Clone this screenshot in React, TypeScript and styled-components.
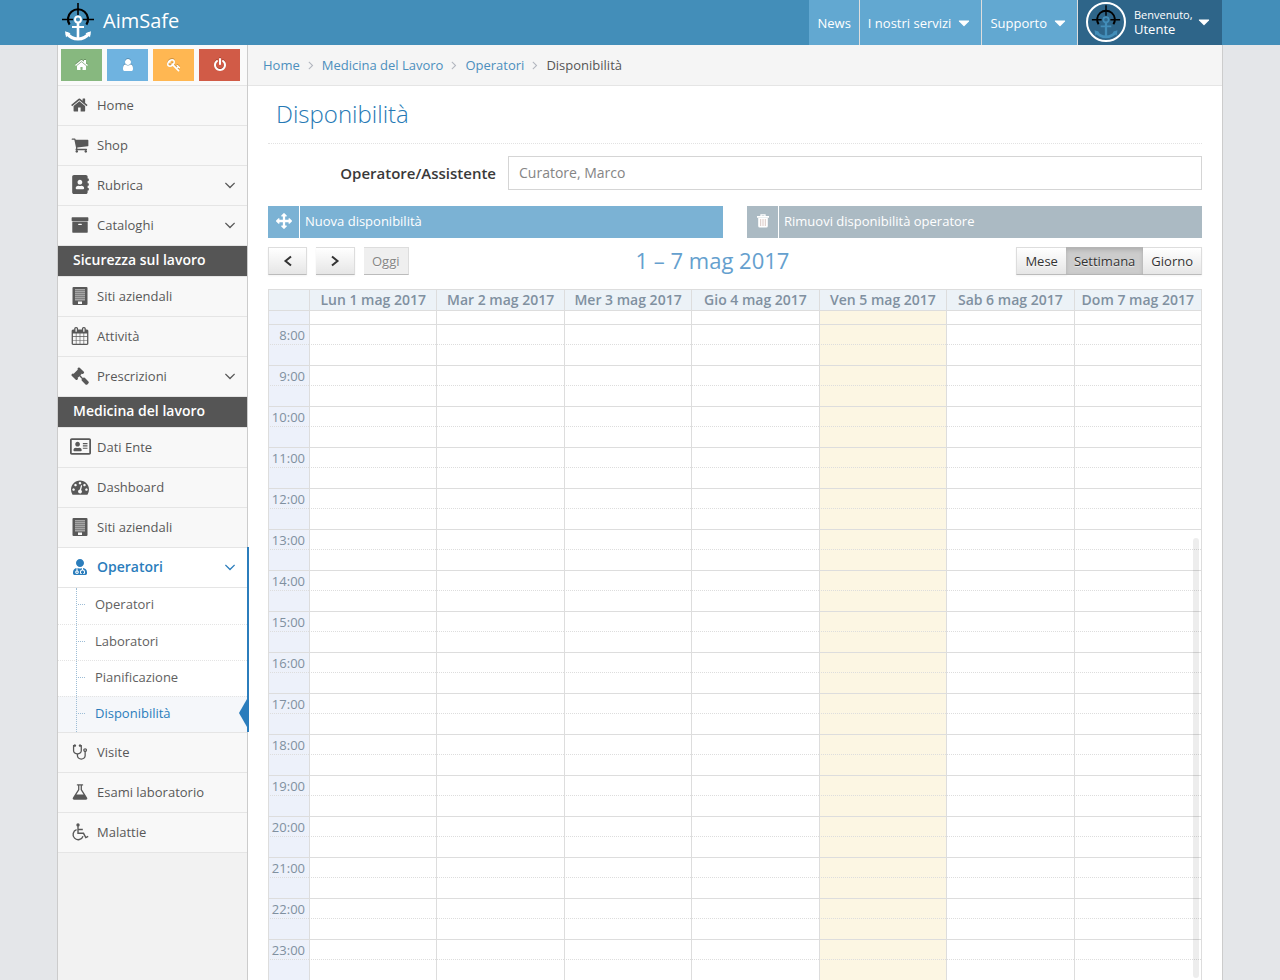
import React from "react";
import styled, { createGlobalStyle, css } from "styled-components";
import { FaAddressBook, FaRegAddressCard, FaUserMd } from "react-icons/fa";

const GlobalStyle = createGlobalStyle`
  *, *::before, *::after { box-sizing: border-box; }
  body {
    margin: 0;
    background: #e4e6e9;
    color: #393939;
    font-family: "Open Sans", "Noto Sans", sans-serif;
    font-size: 13px;
    line-height: 20px;
  }
  a { text-decoration: none; color: inherit; }
  ul, ol { list-style: none; margin: 0; padding: 0; }
  h1, h2 { margin: 0; }
  button, input { font: inherit; margin: 0; }
`;

const paths = {
  home: "M1408 992v480q0 26-19 45t-45 19h-384v-384h-256v384h-384q-26 0-45-19t-19-45v-480q0-1 .5-3t.5-3l575-474 575 474q1 2 1 6zm223-69l-62 74q-8 9-21 11h-3q-13 0-21-7l-692-577-692 577q-12 8-24 7-13-2-21-11l-62-74q-8-10-7-23.5t11-21.500l719-599q32-26 76-26t76 26l244 204v-195q0-14 9-23t23-9h192q14 0 23 9t9 23v408l219 182q10 8 11 21.500t-7 23.500z",
  cart: "M704 1536q0 52-38 90t-90 38-90-38-38-90 38-90 90-38 90 38 38 90zm896 0q0 52-38 90t-90 38-90-38-38-90 38-90 90-38 90 38 38 90zm128-1088v512q0 24-16.500 42.500t-40.500 21.500l-1044 122q13 60 13 70 0 16-24 64h920q26 0 45 19t19 45-19 45-45 19h-1024q-26 0-45-19t-19-45q0-11 8-31.500t16-36 21.500-40 15.500-29.500l-177-823h-204q-26 0-45-19t-19-45 19-45 45-19h256q16 0 28.500 6.500t19.500 15.500 13 24.500 8 26 5.500 29.500 4.500 26h1201q26 0 45 19t19 45z",
  user: "M1536 1399q0 109-62.500 187t-150.500 78h-854q-88 0-150.500-78t-62.500-187q0-85 8.500-160.500t31.500-152 58.500-131 94-89 134.500-34.500q131 128 313 128t313-128q76 0 134.500 34.500t94 89 58.500 131 31.500 152 8.500 160.500zm-256-887q0 159-112.500 271.500t-271.500 112.500-271.500-112.500-112.500-271.500 112.500-271.500 271.500-112.500 271.500 112.500 112.500 271.500z",
  archive: "M1088 832q0-26-19-45t-45-19h-256q-26 0-45 19t-19 45 19 45 45 19h256q26 0 45-19t19-45zm576-192v960q0 26-19 45t-45 19h-1408q-26 0-45-19t-19-45v-960q0-26 19-45t45-19h1408q26 0 45 19t19 45zm64-448v256q0 26-19 45t-45 19h-1536q-26 0-45-19t-19-45v-256q0-26 19-45t45-19h1536q26 0 45 19t19 45z",
  power: "M1664 896q0 156-61 298t-164 245-245 164-298 61-298-61-245-164-164-245-61-298q0-182 80.500-343t226.500-270q43-32 95.500-25t83.500 50q32 42 24.500 94.500t-49.500 84.500q-98 74-151.500 181t-53.500 228q0 104 40.500 198.500t109.500 163.500 163.500 109.500 198.500 40.500 198.500-40.500 163.500-109.500 109.500-163.500 40.500-198.500q0-121-53.500-228t-151.500-181q-42-32-49.500-84.500t24.500-94.500q31-43 84-50t95 25q146 109 226.500 270t80.500 343zm-640-768v640q0 52-38 90t-90 38-90-38-38-90v-640q0-52 38-90t90-38 90 38 38 90z",
  key: "M832 512q0-80-56-136t-136-56-136 56-56 136q0 42 19 83-41-19-83-19-80 0-136 56t-56 136 56 136 136 56 136-56 56-136q0-42-19-83 41 19 83 19 80 0 136-56t56-136zm851 704q0 17-49 66t-66 49q-9 0-28.500-16t-36.500-33-38.500-40-24.500-26l-96 96 220 220q28 28 28 68 0 42-39 81t-81 39q-40 0-68-28l-671-671q-176 131-365 131-163 0-265.500-102.500t-102.500-265.500q0-160 95-313t248-248 313-95q163 0 265.500 102.500t102.500 265.500q0 189-131 365l355 355 96-96q-3-3-26-24.500t-40-38.500-33-36.500-16-28.500q0-17 49-66t66-49q13 0 23 10 6 6 46 44.500t82 79.500 86.500 86 73 78 28.500 41z",
  angleDown: "M1395 736q0 13-10 23l-466 466q-10 10-23 10t-23-10l-466-466q-10-10-10-23t10-23l50-50q10-10 23-10t23 10l393 393 393-393q10-10 23-10t23 10l50 50q10 10 10 23z",
  angleRight: "M1171 960q0 13-10 23l-466 466q-10 10-23 10t-23-10l-50-50q-10-10-10-23t10-23l393-393-393-393q-10-10-10-23t10-23l50-50q10-10 23-10t23 10l466 466q10 10 10 23z",
  caret: "M1408 704q0 26-19 45l-448 448q-19 19-45 19t-45-19l-448-448q-19-19-19-45t19-45 45-19h896q26 0 45 19t19 45z",
  arrows: "M1792 896q0 26-19 45l-256 256q-19 19-45 19t-45-19-19-45v-128h-384v384h128q26 0 45 19t19 45-19 45l-256 256q-19 19-45 19t-45-19l-256-256q-19-19-19-45t19-45 45-19h128v-384h-384v128q0 26-19 45t-45 19-45-19l-256-256q-19-19-19-45t19-45l256-256q19-19 45-19t45 19 19 45v128h384v-384h-128q-26 0-45-19t-19-45 19-45l256-256q19-19 45-19t45 19l256 256q19 19 19 45t-19 45-45 19h-128v384h384v-128q0-26 19-45t45-19 45 19l256 256q19 19 19 45z",
  gavel: "M1771 1536q0 53-37 90l-107 108q-39 37-91 37-53 0-90-37l-363-364q-38-36-38-90 0-53 43-96l-256-256-126 126q-14 14-34 14t-34-14q2 2 12.500 12t12.500 13 10 11.500 10 13.500 6 13.500 5.500 16.500 1.500 18q0 38-28 68-3 3-16.500 18t-19 20.500-18.500 16.500-22 15.500-22 9-26 4.500q-40 0-68-28l-408-408q-28-28-28-68 0-13 4.500-26t9-22 15.500-22 16.500-18.500 20.500-19 18-16.500q30-28 68-28 10 0 18 1.500t16.500 5.500 13.500 6 13.500 10 11.500 10 13 12.500 12 12.500q-14-14-14-34t14-34l348-348q14-14 34-14t34 14q-2-2-12.500-12t-12.500-13-10-11.500-10-13.500-6-13.500-5.500-16.500-1.500-18q0-38 28-68 3-3 16.500-18t19-20.500 18.500-16.500 22-15.500 22-9 26-4.500q40 0 68 28l408 408q28 28 28 68 0 13-4.500 26t-9 22-15.500 22-16.500 18.500-20.500 19-18 16.500q-30 28-68 28-10 0-18-1.500t-16.500-5.500-13.500-6-13.500-10-11.500-10-13-12.500-12-12.500q14 14 14 34t-14 34l-126 126 256 256q43-43 96-43 52 0 91 37l363 363q37 39 37 91z",
  calendar: "M192 1664h288v-288h-288v288zm352 0h320v-288h-320v288zm-352-352h288v-320h-288v320zm352 0h320v-320h-320v320zm-352-384h288v-288h-288v288zm736 736h320v-288h-320v288zm-384-736h320v-288h-320v288zm768 736h288v-288h-288v288zm-384-352h320v-320h-320v320zm-352-864v-288q0-13-9.500-22.500t-22.500-9.500h-64q-13 0-22.500 9.500t-9.500 22.500v288q0 13 9.500 22.500t22.500 9.500h64q13 0 22.500-9.500t9.500-22.500zm736 864h288v-320h-288v320zm-384-384h320v-288h-320v288zm384 0h288v-288h-288v288zm32-480v-288q0-13-9.500-22.500t-22.500-9.500h-64q-13 0-22.500 9.500t-9.500 22.500v288q0 13 9.500 22.500t22.500 9.500h64q13 0 22.500-9.500t9.500-22.500zm384-64v1280q0 52-38 90t-90 38h-1408q-52 0-90-38t-38-90v-1280q0-52 38-90t90-38h128v-96q0-66 47-113t113-47h64q66 0 113 47t47 113v96h384v-96q0-66 47-113t113-47h64q66 0 113 47t47 113v96h128q52 0 90 38t38 90z",
  flask: "M1591 1448q56 89 21.500 152.500t-140.500 63.500h-1152q-106 0-140.500-63.500t21.500-152.500l503-793v-399h-64q-26 0-45-19t-19-45 19-45 45-19h512q26 0 45 19t19 45-19 45-45 19h-64v399zm-779-725l-272 429h712l-272-429-20-31v-436h-128v436z",
  dashboard: "M384 1152q0-53-37.500-90.500t-90.500-37.500-90.500 37.500-37.500 90.500 37.500 90.500 90.500 37.500 90.500-37.500 37.500-90.500zm192-448q0-53-37.500-90.500t-90.500-37.500-90.500 37.500-37.500 90.500 37.500 90.500 90.500 37.500 90.500-37.500 37.500-90.500zm428 481l101-382q6-26-7.500-48.500t-38.500-29.500-48 6.500-30 39.500l-101 382q-60 5-107 43.500t-63 98.500q-20 77 20 146t117 89 146-20 89-117q16-60-6-117t-72-91zm660-33q0-53-37.500-90.500t-90.500-37.500-90.500 37.500-37.500 90.500 37.500 90.500 90.500 37.500 90.500-37.500 37.500-90.500zm-640-640q0-53-37.500-90.500t-90.500-37.500-90.500 37.500-37.500 90.500 37.500 90.500 90.500 37.500 90.500-37.500 37.500-90.500zm448 192q0-53-37.500-90.500t-90.500-37.500-90.500 37.500-37.500 90.500 37.500 90.500 90.500 37.500 90.500-37.500 37.500-90.500zm320 448q0 261-141 483-19 29-54 29h-1402q-35 0-54-29-141-221-141-483 0-182 71-348t191-286 286-191 348-71 348 71 286 191 191 286 71 348z",
  stethoscope: "M1472 704q0-26-19-45t-45-19-45 19-19 45 19 45 45 19 45-19 19-45zm128 0q0 62-35.500 111t-92.500 70v395q0 159-131.500 271.500t-316.500 112.500-316.500-112.500-131.500-271.500v-132q-164-20-274-128t-110-252v-512q0-26 19-45t45-19q6 0 16 2 17-30 47-48t65-18q53 0 90.500 37.500t37.500 90.500-37.500 90.500-90.500 37.500q-33 0-64-18v402q0 106 94 181t226 75 226-75 94-181v-402q-31 18-64 18-53 0-90.500-37.500t-37.500-90.500 37.500-90.500 90.500-37.500q35 0 65 18t47 48q10-2 16-2 26 0 45 19t19 45v512q0 144-110 252t-274 128v132q0 106 94 181t226 75 226-75 94-181v-395q-57-21-92.500-70t-35.500-111q0-80 56-136t136-56 136 56 56 136z",
};

function Glyph({ name, size = 18 }: { name: keyof typeof paths; size?: number }) {
  return (
    <svg width={size} height={size} viewBox="0 0 1792 1792" fill="currentColor" aria-hidden="true">
      <path d={paths[name]} />
    </svg>
  );
}

function BuildingIcon() {
  return (
    <svg width="16" height="20" viewBox="0 0 16 20" aria-hidden="true">
      <rect x="0.500" y="1" width="15" height="18" rx="1" fill="currentColor" />
      <g fill="#f8f8f8">
        {[3, 5, 7, 9, 11, 13].map((y) =>
          [3, 5, 7, 9, 11].map((x) => <rect key={`${x}-${y}`} x={x + 0.4} y={y + 0.2} width="1.200" height="1.200" />)
        )}
        <rect x="6" y="15.500" width="4" height="2.500" />
      </g>
    </svg>
  );
}

function WheelchairIcon() {
  return (
    <svg width="18" height="18" viewBox="0 0 18 18" fill="none" stroke="currentColor" strokeWidth="1.400" aria-hidden="true">
      <circle cx="7" cy="1.900" r="1.700" fill="currentColor" stroke="none" />
      <path d="M7 3v7.300h5.500l2.300 4.300 2.400-1.200M7 6.500h4.800" />
      <path d="M5.600 6.700A5.100 5.100 0 1 0 12 13.200" />
    </svg>
  );
}

function TrashIcon() {
  return (
    <svg width="12" height="14" viewBox="0 0 12 14" aria-hidden="true">
      <path d="M4 2V.8h4V2" fill="none" stroke="#fff" strokeWidth="1.300" />
      <path d="M0 2h12v1.700H0z M1.200 4h9.600v8q0 1.500-1.500 1.500H2.700q-1.500 0-1.500-1.500z" fill="#fff" />
      <path d="M3.700 5v7M6 5v7M8.300 5v7" stroke="#d9c8c4" strokeWidth="1" />
    </svg>
  );
}

function AnchorMark({ size, anchor }: { size: number; anchor: string }) {
  return (
    <svg width={size} height={Math.round(size * 1.15)} viewBox="0 0 34 39" fill="none" aria-hidden="true">
      <g stroke="#000">
        <path d="M17 1v12M1 17.500h11M22 17.500h11" strokeWidth="1.600" />
        <path d="M8.600 22.700A10 10 0 1 1 25.400 22.700" strokeWidth="2.200" />
      </g>
      <g stroke={anchor}>
        <circle cx="17" cy="17.500" r="3" strokeWidth="1.900" />
        <path d="M17 20.500V36" strokeWidth="2.600" />
        <path d="M11 25h12" strokeWidth="2" />
        <path d="M5.500 31Q10 37 17 37T28.500 31" strokeWidth="3" />
      </g>
      <path d="M4 29.300l5.500 2-4.500 4zM30 29.300l-5.500 2 4.500 4z" fill={anchor} />
    </svg>
  );
}

const Page = styled.div`
  display: flex;
  flex-direction: column;
  min-height: 100vh;
`;

const TopBar = styled.header`
  background: #438eb9;
`;

const TopBarInner = styled.div`
  display: flex;
  justify-content: space-between;
  max-width: 1164px;
  height: 45px;
  margin: 0 auto;
`;

const Brand = styled.a`
  display: flex;
  align-items: center;
  gap: 8px;
  padding: 0 3px 3px;
  color: #fff;
  font-size: 20px;
`;

const TopNav = styled.nav`
  display: flex;
`;

const TopLink = styled.a`
  display: flex;
  align-items: center;
  gap: 4px;
  padding: 0 8px;
  border-right: 1px solid #ddd;
  background: #62a8d1;
  color: #fff;
`;

const UserMenu = styled.button`
  display: flex;
  align-items: center;
  padding: 0 9px 2px 8px;
  border: 0;
  background: #2e6589;
  color: #fff;
  text-align: left;
  line-height: 15px;
`;

const Avatar = styled.span`
  display: flex;
  align-items: center;
  justify-content: center;
  width: 40px;
  height: 40px;
  margin-right: 8px;
  border: 2px solid #fff;
  border-radius: 50%;
`;

const Greeting = styled.span`
  display: block;
  width: 61px;
  white-space: nowrap;

  small {
    display: block;
    font-size: 11px;
  }
`;

const Container = styled.div`
  display: flex;
  flex: 1;
  width: 100%;
  max-width: 1166px;
  margin: 0 auto;
  border: solid #ccc;
  border-width: 0 1px;
  background: #fff;
`;

const Sidebar = styled.aside`
  flex: 0 0 190px;
  border-right: 1px solid #ccc;
  background: #f2f2f2;
`;

const Shortcuts = styled.div`
  display: flex;
  gap: 5px;
  height: 40px;
  padding: 4px 3px;
  background: #fafafa;
`;

const Shortcut = styled.button<{ $tone: string }>`
  display: flex;
  align-items: center;
  justify-content: center;
  width: 41px;
  height: 32px;
  padding: 0;
  border: 0;
  background: ${(p) => p.$tone};
  color: #fff;

  svg { filter: drop-shadow(0 -1px 0 rgba(0, 0, 0, 0.2)); }
`;

const Menu = styled.ul`
  border-bottom: 1px solid #e5e5e5;
`;

const MenuItem = styled.li`
  position: relative;
  border-top: 1px solid #e5e5e5;
`;

const MenuLink = styled.a<{ $active?: boolean }>`
  display: grid;
  grid-template-columns: 30px 1fr 16px;
  align-items: center;
  height: 39px;
  padding: 0 10px 2px 7px;
  background: ${(p) => (p.$active ? "#fff" : "#f8f8f8")};
  color: ${(p) => (p.$active ? "#2b7dbc" : "#585858")};
  font-size: ${(p) => (p.$active ? 14 : 13)}px;
  font-weight: ${(p) => (p.$active ? 600 : 400)};

  > span { padding: 0 2px; }
  > svg:first-child { justify-self: center; }
`;

const MenuSection = styled.li`
  height: 31px;
  padding: 0 15px;
  border-top: 1px solid #e5e5e5;
  background: #555;
  color: #fff;
  font-size: 14px;
  font-weight: 600;
  line-height: 28px;
`;

const ActiveBar = styled.span`
  position: absolute;
  top: -1px;
  right: -2px;
  bottom: 0;
  width: 2px;
  background: #2b7dbc;
`;

const SubMenu = styled.ul`
  position: relative;
  border-top: 1px solid #e5e5e5;
  background: #fff;

  &::before {
    content: "";
    position: absolute;
    top: 0;
    bottom: 0;
    left: 18px;
    z-index: 1;
    border-left: 1px dotted #9dbdd6;
  }
`;

const SubItem = styled.li<{ $active?: boolean }>`
  position: relative;
  height: 36px;

  & + & { border-top: 1px dotted #e4e4e4; }

  &::before {
    content: "";
    position: absolute;
    top: 16px;
    left: 20px;
    width: 7px;
    border-top: 1px dotted #9dbdd6;
  }

  ${(p) =>
    p.$active &&
    css`
      background: #f5f7fa;
      &::after {
        content: "";
        position: absolute;
        top: 2px;
        right: 0;
        border: solid transparent;
        border-width: 14px 8px 14px 0;
        border-right-color: #2b7dbc;
      }
    `}
`;

const SubLink = styled.a<{ $active?: boolean }>`
  display: block;
  padding-left: 37px;
  color: ${(p) => (p.$active ? "#2b7dbc" : "#616161")};
  line-height: 32px;
`;

const Main = styled.main`
  flex: 1;
  min-width: 0;
`;

const Breadcrumbs = styled.ol`
  display: flex;
  align-items: center;
  height: 41px;
  padding: 0 15px;
  border-bottom: 1px solid #e5e5e5;
  background: #f5f5f5;
  color: #555;

  li { display: flex; align-items: center; }
  a { color: #4c8fbd; }
  svg { margin: 0 4px; color: #b2b6bf; }
`;

const Content = styled.div`
  padding: 12px 20px 0;
`;

const PageTitle = styled.h1`
  height: 46px;
  padding: 0 8px;
  border-bottom: 1px dotted #e2e2e2;
  color: #2679b5;
  font-size: 24px;
  font-weight: 300;
  line-height: 32px;
`;

const Field = styled.div`
  display: flex;
  align-items: center;
  gap: 12px;
  margin: 12px 0 16px;
`;

const FieldLabel = styled.label`
  flex: 0 0 228px;
  font-size: 15px;
  font-weight: 600;
  text-align: right;
`;

const TextBox = styled.input`
  flex: 1;
  min-width: 0;
  height: 34px;
  padding: 0 10px 1px;
  border: 1px solid #d5d5d5;
  background: #fff;
  color: #858585;
  font-size: 14px;
`;

const Actions = styled.div`
  display: grid;
  grid-template-columns: 1fr 1fr;
  gap: 24px;
`;

const ActionButton = styled.button<{ $tone: string }>`
  display: flex;
  height: 32px;
  padding: 0;
  border: 0;
  background: ${(p) => p.$tone};
  color: #fff;
  line-height: 30px;
`;

const ActionIcon = styled.span`
  display: flex;
  align-items: center;
  justify-content: center;
  width: 32px;
  height: 32px;
  margin-right: 5px;
  padding-bottom: 3px;
  border-right: 1px solid #fff;
`;

const Toolbar = styled.div`
  display: flex;
  justify-content: space-between;
  align-items: flex-start;
  margin: 9px 0 14px;
`;

const ToolGroup = styled.div<{ $joined?: boolean }>`
  display: flex;
  gap: ${(p) => (p.$joined ? "0" : "10px")};
`;

const ToolButton = styled.button<{ $pressed?: boolean }>`
  display: flex;
  align-items: center;
  justify-content: center;
  min-width: 39px;
  height: 28px;
  padding: 0 8px;
  border: 1px solid #ddd;
  border-bottom-color: #bbb;
  background: linear-gradient(#fff, #e6e6e6);
  box-shadow: 0 1px 2px rgba(0, 0, 0, 0.05);
  color: #333;
  text-shadow: 0 1px 1px rgba(255, 255, 255, 0.75);

  & + & { margin-left: ${(p) => (p.$pressed ? "-1px" : "0")}; }

  &:disabled {
    background: #efefef;
    box-shadow: none;
    color: #858585;
  }

  ${(p) =>
    p.$pressed &&
    css`
      border-color: #b5b5b5;
      background: #ccc;
      box-shadow: inset 0 2px 4px rgba(0, 0, 0, 0.15);
      & + & { border-left: 0; }
    `}
`;

const RangeTitle = styled.h2`
  color: #65a0ce;
  font-size: 22px;
  font-weight: 400;
  line-height: 26px;
`;

const CalendarFrame = styled.div`
  position: relative;
`;

const CalendarTable = styled.table`
  width: 100%;
  table-layout: fixed;
  border-collapse: separate;
  border-spacing: 0;
  border-right: 1px solid #ddd;

  th, td {
    padding: 0;
    border: solid #ddd;
    border-width: 1px 0 0 1px;
  }
`;

const AxisCol = styled.col`
  width: 41px;
`;

const DayHead = styled.th`
  height: 21px;
  background: #ecf2f7;
  color: #8090a0;
  font-size: 14px;
  font-weight: 600;
  line-height: 20px;
  white-space: nowrap;
`;

const Slot = styled.tr<{ $kind: "lead" | "hour" | "half" }>`
  height: ${(p) => ({ lead: 14, hour: 20, half: 21 })[p.$kind]}px;

  > * { border-top-style: ${(p) => (p.$kind === "half" ? "dotted" : "solid")} !important; }
`;

const TimeCell = styled.th`
  background: #edf1fa;
  color: #8090a0;
  font-weight: 400;
  line-height: 17px;
  text-align: right;

  && { padding: ${(p) => (p.scope ? "2px 4px 0 0" : "0")}; }
`;

const DayCell = styled.td<{ $today: boolean }>`
  background: ${(p) => (p.$today ? "#fcf6e3" : "#fff")};
`;

const ScrollThumb = styled.span`
  position: absolute;
  right: 3px;
  bottom: 2px;
  width: 6px;
  height: 440px;
  border-radius: 3px;
  background: rgba(0, 0, 0, 0.07);
`;

const days = ["Lun 1", "Mar 2", "Mer 3", "Gio 4", "Ven 5", "Sab 6", "Dom 7"];
const today = 4;
const hours = Array.from({ length: 16 }, (_, i) => i + 8);

function Entry({ icon, label, expandable }: { icon: React.ReactNode; label: string; expandable?: boolean }) {
  return (
    <MenuItem>
      <MenuLink href="#">
        {icon}
        <span>{label}</span>
        {expandable && <Glyph name="angleDown" />}
      </MenuLink>
    </MenuItem>
  );
}

function DayCells() {
  return (
    <>
      {days.map((d, i) => (
        <DayCell key={d} $today={i === today} />
      ))}
    </>
  );
}

function SideMenu() {
  return (
    <Menu>
      <Entry icon={<Glyph name="home" />} label="Home" />
      <Entry icon={<Glyph name="cart" />} label="Shop" />
      <Entry icon={<FaAddressBook size={19} />} label="Rubrica" expandable />
      <Entry icon={<Glyph name="archive" />} label="Cataloghi" expandable />
      <MenuSection>Sicurezza sul lavoro</MenuSection>
      <Entry icon={<BuildingIcon />} label="Siti aziendali" />
      <Entry icon={<Glyph name="calendar" />} label="Attività" />
      <Entry icon={<Glyph name="gavel" />} label="Prescrizioni" expandable />
      <MenuSection>Medicina del lavoro</MenuSection>
      <Entry icon={<FaRegAddressCard size={21} />} label="Dati Ente" />
      <Entry icon={<Glyph name="dashboard" />} label="Dashboard" />
      <Entry icon={<BuildingIcon />} label="Siti aziendali" />
      <MenuItem>
        <MenuLink href="#" $active>
          <FaUserMd size={16} />
          <span>Operatori</span>
          <Glyph name="angleDown" />
        </MenuLink>
        <SubMenu>
          {["Operatori", "Laboratori", "Pianificazione", "Disponibilità"].map((label) => (
            <SubItem key={label} $active={label === "Disponibilità"}>
              <SubLink href="#" $active={label === "Disponibilità"}>
                {label}
              </SubLink>
            </SubItem>
          ))}
        </SubMenu>
        <ActiveBar />
      </MenuItem>
      <Entry icon={<Glyph name="stethoscope" />} label="Visite" />
      <Entry icon={<Glyph name="flask" />} label="Esami laboratorio" />
      <Entry icon={<WheelchairIcon />} label="Malattie" />
    </Menu>
  );
}

function Calendar() {
  return (
    <CalendarFrame>
      <CalendarTable>
        <colgroup>
          <AxisCol />
          {days.map((d) => (
            <col key={d} />
          ))}
        </colgroup>
        <thead>
          <tr>
            <DayHead aria-label="Ora" />
            {days.map((d) => (
              <DayHead key={d} scope="col">{d} mag 2017</DayHead>
            ))}
          </tr>
        </thead>
        <tbody>
          <Slot $kind="lead">
            <TimeCell />
            <DayCells />
          </Slot>
          {hours.map((h) => (
            <React.Fragment key={h}>
              <Slot $kind="hour">
                <TimeCell scope="row">{h}:00</TimeCell>
                <DayCells />
              </Slot>
              <Slot $kind="half">
                <TimeCell />
                <DayCells />
              </Slot>
            </React.Fragment>
          ))}
        </tbody>
      </CalendarTable>
      <ScrollThumb />
    </CalendarFrame>
  );
}

export default function App() {
  return (
    <Page>
      <GlobalStyle />
      <TopBar>
        <TopBarInner>
          <Brand href="#">
            <AnchorMark size={34} anchor="#fff" />
            AimSafe
          </Brand>
          <TopNav>
            <TopLink href="#">News</TopLink>
            <TopLink href="#">I nostri servizi <Glyph name="caret" /></TopLink>
            <TopLink href="#">Supporto <Glyph name="caret" /></TopLink>
            <UserMenu type="button">
              <Avatar><AnchorMark size={30} anchor="#438eb9" /></Avatar>
              <Greeting><small>Benvenuto,</small>Utente</Greeting>
              <Glyph name="caret" />
            </UserMenu>
          </TopNav>
        </TopBarInner>
      </TopBar>
      <Container>
        <Sidebar>
          <Shortcuts>
            <Shortcut type="button" aria-label="Home" $tone="#87b87f"><Glyph name="home" size={14} /></Shortcut>
            <Shortcut type="button" aria-label="Profilo" $tone="#6fb3e0"><Glyph name="user" size={14} /></Shortcut>
            <Shortcut type="button" aria-label="Password" $tone="#ffb752"><Glyph name="key" size={14} /></Shortcut>
            <Shortcut type="button" aria-label="Esci" $tone="#d15b47"><Glyph name="power" size={14} /></Shortcut>
          </Shortcuts>
          <SideMenu />
        </Sidebar>
        <Main>
          <Breadcrumbs>
            <li><a href="#">Home</a><Glyph name="angleRight" size={14} /></li>
            <li><a href="#">Medicina del Lavoro</a><Glyph name="angleRight" size={14} /></li>
            <li><a href="#">Operatori</a><Glyph name="angleRight" size={14} /></li>
            <li>Disponibilità</li>
          </Breadcrumbs>
          <Content>
            <PageTitle>Disponibilità</PageTitle>
            <Field>
              <FieldLabel htmlFor="operator">Operatore/Assistente</FieldLabel>
              <TextBox id="operator" type="text" defaultValue="Curatore, Marco" />
            </Field>
            <Actions>
              <ActionButton type="button" $tone="#7bb2d4">
                <ActionIcon><Glyph name="arrows" size={16} /></ActionIcon>
                Nuova disponibilità
              </ActionButton>
              <ActionButton type="button" $tone="#abbac3">
                <ActionIcon><TrashIcon /></ActionIcon>
                Rimuovi disponibilità operatore
              </ActionButton>
            </Actions>
            <Toolbar>
              <ToolGroup>
                <ToolButton type="button" aria-label="Precedente">
                  <svg width="10" height="12" viewBox="0 0 10 12" fill="none" stroke="currentColor" strokeWidth="2"><path d="M8 1.500L2.500 6 8 10.500" /></svg>
                </ToolButton>
                <ToolButton type="button" aria-label="Successivo">
                  <svg width="10" height="12" viewBox="0 0 10 12" fill="none" stroke="currentColor" strokeWidth="2"><path d="M2 1.500L7.500 6 2 10.500" /></svg>
                </ToolButton>
                <ToolButton type="button" disabled>Oggi</ToolButton>
              </ToolGroup>
              <RangeTitle>1 – 7 mag 2017</RangeTitle>
              <ToolGroup $joined>
                <ToolButton type="button">Mese</ToolButton>
                <ToolButton type="button" $pressed>Settimana</ToolButton>
                <ToolButton type="button">Giorno</ToolButton>
              </ToolGroup>
            </Toolbar>
            <Calendar />
          </Content>
        </Main>
      </Container>
    </Page>
  );
}
